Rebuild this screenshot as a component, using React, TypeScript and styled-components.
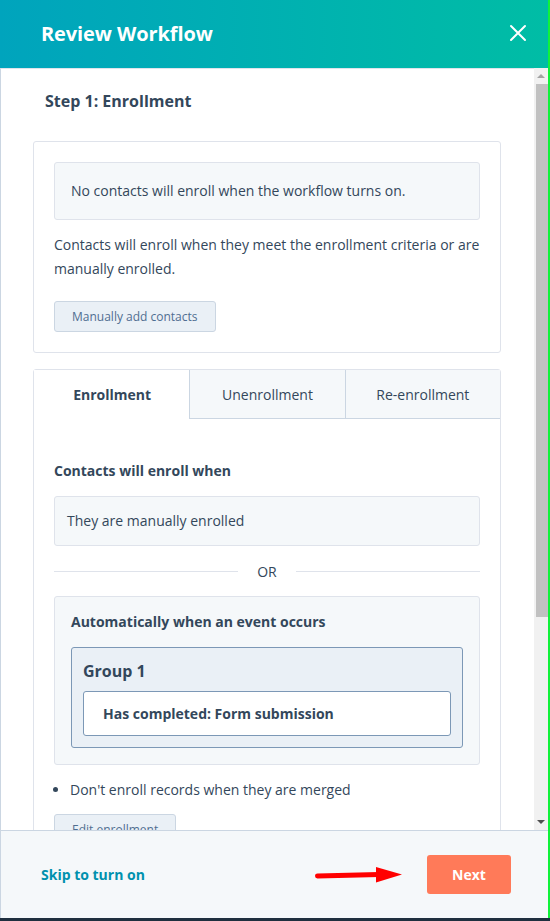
import styled, { createGlobalStyle } from "styled-components";

const GlobalStyle = createGlobalStyle`
   * {
      box-sizing: border-box;
   }
   html, body {
      margin: 0;
      padding: 0;
      background: #1f2f3f;
      font-family: "Open Sans", "Liberation Sans", sans-serif;
      color: #33475b;
   }
`;

const App = () => {
   return (
      <Page>
         <GlobalStyle />
         <Panel>
            <Header>
               <HeaderTitle>Review Workflow</HeaderTitle>
               <CloseButton aria-label="close">
                  <svg width="18" height="18" viewBox="0 0 18 18">
                     <path d="M2 2 L16 16 M16 2 L2 16" stroke="#fff" strokeWidth="2" strokeLinecap="round" />
                  </svg>
               </CloseButton>
            </Header>

            <Body>
               <Content>
                  <StepTitle>Step 1: Enrollment</StepTitle>

                  <Card>
                     <InfoBox>No contacts will enroll when the workflow turns on.</InfoBox>
                     <Paragraph>
                        Contacts will enroll when they meet the enrollment criteria or are manually enrolled.
                     </Paragraph>
                     <SecondaryBtn $gap={20}>Manually add contacts</SecondaryBtn>
                  </Card>

                  <TabCard>
                     <Tabs>
                        <Tab $active>Enrollment</Tab>
                        <Tab>Unenrollment</Tab>
                        <Tab>Re-enrollment</Tab>
                     </Tabs>
                     <TabPanel>
                        <SectionTitle>Contacts will enroll when</SectionTitle>
                        <ConditionBox>They are manually enrolled</ConditionBox>
                        <Divider>
                           <DividerLine />
                           <DividerText>OR</DividerText>
                           <DividerLine />
                        </Divider>
                        <EventBox>
                           <EventTitle>Automatically when an event occurs</EventTitle>
                           <GroupBox>
                              <GroupTitle>Group 1</GroupTitle>
                              <FilterItem>Has completed: Form submission</FilterItem>
                           </GroupBox>
                        </EventBox>
                        <BulletList>
                           <li>Don't enroll records when they are merged</li>
                        </BulletList>
                        <SecondaryBtn $gap={12}>Edit enrollment</SecondaryBtn>
                        <Spacer />
                     </TabPanel>
                  </TabCard>
               </Content>

               <ScrollBar>
                  <ScrollArrow $dir="up" />
                  <ScrollTrack>
                     <ScrollThumb />
                  </ScrollTrack>
                  <ScrollArrow $dir="down" />
               </ScrollBar>
            </Body>

            <Footer>
               <SkipLink>Skip to turn on</SkipLink>
               <FooterRight>
                  <svg width="87" height="16" viewBox="0 0 87 16">
                     <path d="M2.5 9 L64 7.5" stroke="#ff0000" strokeWidth="5" strokeLinecap="round" />
                     <polygon points="61,0 87,7.5 61,15.5" fill="#ff0000" />
                  </svg>
                  <PrimaryBtn>Next</PrimaryBtn>
               </FooterRight>
            </Footer>
         </Panel>
      </Page>
   );
};

export default App;

const Page = styled.div`
   width: 550px;
   height: 921px;
   background: #1f2f3f;
   overflow: hidden;
`;

const Panel = styled.div`
   width: 550px;
   height: 918px;
   display: flex;
   flex-direction: column;
   background: #fff;
   border-right: 2px solid #10f23a;
`;

const Header = styled.div`
   height: 68px;
   flex-shrink: 0;
   display: flex;
   align-items: center;
   justify-content: space-between;
   padding: 0 21px 0 41px;
   background: linear-gradient(90deg, #00a4bd 0%, #00bda5 100%);
`;

const HeaderTitle = styled.div`
   color: #fff;
   font-size: 20px;
   font-weight: 700;
   letter-spacing: -0.1px;
   margin-top: -1px;
`;

const CloseButton = styled.button`
   border: none;
   background: none;
   padding: 0;
   width: 18px;
   height: 18px;
   margin-top: -3px;
   display: flex;
   cursor: pointer;
`;

////
const Body = styled.div`
   flex: 1;
   min-height: 0;
   display: flex;
   flex-direction: row;
`;

const Content = styled.div`
   flex: 1;
   overflow: hidden;
   border-left: 1px solid #cbd6e2;
   border-top: 1px solid #dfe3eb;
   padding: 20px 33px 0 32px;
`;

const StepTitle = styled.div`
   padding: 0 12px;
   font-size: 16px;
   font-weight: 700;
   line-height: 24px;
`;

const Card = styled.div`
   margin-top: 28px;
   border: 1px solid #dfe3eb;
   border-radius: 3px;
   padding: 20px;
   display: flex;
   flex-direction: column;
   align-items: flex-start;
`;

const InfoBox = styled.div`
   width: 100%;
   background: #f5f8fa;
   border: 1px solid #dfe3eb;
   border-radius: 3px;
   padding: 16px;
   font-size: 14px;
   line-height: 24px;
`;

const Paragraph = styled.p`
   margin: 13px 0 0;
   font-size: 14px;
   line-height: 24px;
`;

const SecondaryBtn = styled.button<{ $gap: number }>`
   margin-top: ${(p) => p.$gap}px;
   flex-shrink: 0;
   height: 31px;
   padding: 0 17px;
   background: #eaf0f6;
   border: 1px solid #cbd6e2;
   border-radius: 3px;
   color: #506e91;
   font-family: "Open Sans", "Liberation Sans", sans-serif;
   font-size: 12px;
   cursor: pointer;
`;

const TabCard = styled.div`
   margin-top: 16px;
   border: 1px solid #dfe3eb;
   border-radius: 3px;
`;

const Tabs = styled.div`
   display: grid;
   grid-template-columns: 1fr 1fr 1fr;
   height: 49px;
`;

const Tab = styled.div<{ $active?: boolean }>`
   display: flex;
   align-items: center;
   justify-content: center;
   font-size: 14px;
   font-weight: ${(p) => (p.$active ? 700 : 400)};
   background: ${(p) => (p.$active ? "#fff" : "#f5f8fa")};
   border-bottom: 1px solid ${(p) => (p.$active ? "transparent" : "#cbd6e2")};
   border-left: 1px solid ${(p) => (p.$active ? "transparent" : "#cbd6e2")};
`;

const TabPanel = styled.div`
   padding: 40px 20px 0;
   display: flex;
   flex-direction: column;
   align-items: flex-start;
`;

const SectionTitle = styled.div`
   font-size: 14px;
   font-weight: 700;
   line-height: 24px;
`;

const ConditionBox = styled.div`
   width: 100%;
   margin-top: 13px;
   background: #f5f8fa;
   border: 1px solid #dfe3eb;
   border-radius: 3px;
   padding: 12px;
   font-size: 14px;
   line-height: 24px;
`;

const Divider = styled.div`
   width: 100%;
   height: 50px;
   display: flex;
   align-items: center;
`;

const DividerLine = styled.div`
   flex: 1;
   height: 1px;
   background: #dfe3eb;
`;

const DividerText = styled.div`
   padding: 0 19px;
   font-size: 14px;
`;

const EventBox = styled.div`
   width: 100%;
   background: #f5f8fa;
   border: 1px solid #dfe3eb;
   border-radius: 3px;
   padding: 13px 16px 16px;
`;

const EventTitle = styled.div`
   font-size: 14px;
   font-weight: 700;
   line-height: 24px;
`;

const GroupBox = styled.div`
   margin-top: 13px;
   background: #eaf0f6;
   border: 1px solid #7c98b6;
   border-radius: 3px;
   padding: 11px;
`;

const GroupTitle = styled.div`
   font-size: 16px;
   font-weight: 700;
   line-height: 24px;
`;

const FilterItem = styled.div`
   margin-top: 8px;
   height: 45px;
   display: flex;
   align-items: center;
   padding: 0 19px;
   background: #fff;
   border: 1px solid #7c98b6;
   border-radius: 3px;
   font-size: 14px;
   font-weight: 700;
`;

const BulletList = styled.ul`
   margin: 13px 0 0;
   padding-left: 16px;
   font-size: 14px;
   line-height: 24px;
`;

const Spacer = styled.div`
   height: 280px;
   flex-shrink: 0;
`;

////
const ScrollBar = styled.div`
   width: 14px;
   flex-shrink: 0;
   background: #f1f1f1;
   display: flex;
   flex-direction: column;
`;

const ScrollArrow = styled.div<{ $dir: "up" | "down" }>`
   height: 16px;
   flex-shrink: 0;
   display: flex;
   align-items: center;
   justify-content: center;

   &::after {
      content: "";
      width: 0;
      height: 0;
      border-left: 4px solid transparent;
      border-right: 4px solid transparent;
      ${(p) =>
         p.$dir === "up"
            ? "border-bottom: 4px solid #a3a3a3;"
            : "border-top: 4px solid #505050;"}
   }
`;

const ScrollTrack = styled.div`
   flex: 1;
   padding-left: 2px;
`;

const ScrollThumb = styled.div`
   height: 533px;
   background: #c1c1c1;
`;

////
const Footer = styled.div`
   height: 88px;
   flex-shrink: 0;
   display: flex;
   align-items: center;
   justify-content: space-between;
   padding: 0 37px 0 40px;
   background: #f5f8fa;
   border-top: 1px solid #cbd6e2;
   border-left: 1px solid #cbd6e2;
`;

const SkipLink = styled.a`
   color: #0091ae;
   font-size: 14px;
   font-weight: 700;
   cursor: pointer;
`;

const FooterRight = styled.div`
   display: flex;
   align-items: center;
   gap: 25px;
`;

const PrimaryBtn = styled.button`
   width: 84px;
   height: 39px;
   background: #ff7a59;
   border: none;
   border-radius: 3px;
   color: #fff;
   font-family: "Open Sans", "Liberation Sans", sans-serif;
   font-size: 14px;
   font-weight: 700;
   cursor: pointer;
`;
